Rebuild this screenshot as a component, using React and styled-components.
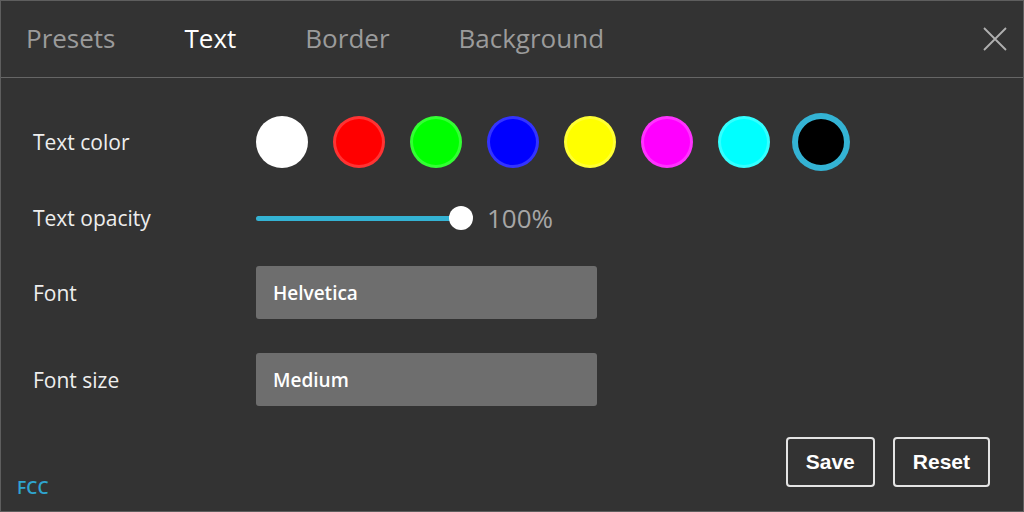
import React, { useState } from "react"
import styled, { createGlobalStyle } from "styled-components"

const GlobalStyle = createGlobalStyle`
  html, body {
    margin: 0;
    padding: 0;
    background: #333333;
  }
  * {
    box-sizing: border-box;
  }
`

const Panel = styled.div`
  display: flex;
  flex-direction: column;
  width: 1024px;
  height: 512px;
  background: #333333;
  border: 1px solid #5e5e5e;
  font-family: "Open Sans", "Noto Sans", sans-serif;
  color: #eeeeee;
`
const Header = styled.div`
  display: flex;
  align-items: center;
  height: 77px;
  padding: 0 0 2px 25px;
  border-bottom: 1px solid #666666;
`
const Tabs = styled.div`
  display: flex;
  gap: 69px;
  flex: 1;
`
const Tab = styled.div`
  font-size: 26px;
  line-height: 1;
  color: ${(p) => (p.$active ? "#ffffff" : "#9b9b9b")};
  cursor: pointer;
`
const CloseBtn = styled.button`
  display: flex;
  align-items: center;
  justify-content: center;
  width: 24px;
  height: 24px;
  margin: 2px 16px 0 0;
  padding: 0;
  background: none;
  border: none;
  cursor: pointer;
`
const Body = styled.div`
  display: flex;
  flex-direction: column;
  flex: 1;
  padding: 26px 33px 24px 32px;
`
const Row = styled.div`
  display: grid;
  grid-template-columns: 223px 1fr;
  align-items: center;
  height: ${(p) => p.$h}px;
`
const Label = styled.div`
  font-size: 21px;
  color: #eeeeee;
`
const Swatches = styled.div`
  display: flex;
  gap: 25px;
`
const Swatch = styled.div`
  width: 52px;
  height: 52px;
  border-radius: 50%;
  background: ${(p) => p.$color};
  border: 3px solid
    ${(p) => (p.$selected ? "#34b3d4" : "rgba(255, 255, 255, 0.2)")};
  box-shadow: ${(p) => (p.$selected ? "0 0 0 3px #34b3d4" : "none")};
  cursor: pointer;
`
const SliderWrap = styled.div`
  display: flex;
  align-items: center;
  gap: 26px;
`
const Track = styled.div`
  position: relative;
  width: 205px;
  height: 5px;
  border-radius: 3px;
  background: #4a4a4a;
`
const Fill = styled.div`
  height: 100%;
  border-radius: 3px;
  background: #34b3d4;
`
const Thumb = styled.div`
  position: absolute;
  top: 50%;
  width: 24px;
  height: 24px;
  margin: -12px 0 0 -12px;
  border-radius: 50%;
  background: #ffffff;
`
const Percent = styled.span`
  font-size: 26px;
  color: #a6a6a6;
`
const Select = styled.div`
  display: flex;
  align-items: center;
  width: 341px;
  height: 53px;
  padding: 0 17px;
  background: #6e6e6e;
  border-radius: 3px;
  font-size: 19px;
  font-weight: 600;
  color: #ffffff;
`
const Footer = styled.div`
  display: flex;
  justify-content: space-between;
  align-items: flex-end;
  margin-top: auto;
  margin-left: -16px;
`
const Brand = styled.span`
  font-size: 17.5px;
  font-weight: 600;
  color: #2fa5d0;
  line-height: 20px;
  margin-bottom: -10px;
`
const Buttons = styled.div`
  display: flex;
  gap: 18px;
`
const Button = styled.button`
  height: 50px;
  padding: 0 18px;
  background: transparent;
  border: 2px solid #e4e4e4;
  border-radius: 4px;
  color: #ffffff;
  font-family: "Liberation Sans", Arial, sans-serif;
  font-weight: 700;
  font-size: 21px;
  cursor: pointer;
`

const colors = [
  "#ffffff",
  "#ff0000",
  "#00ff00",
  "#0000ff",
  "#ffff00",
  "#ff00ff",
  "#00ffff",
  "#000000",
]

const tabs = ["Presets", "Text", "Border", "Background"]

export default function App() {
  const [tab, setTab] = useState("Text")
  const [color, setColor] = useState("#000000")
  const opacity = 100

  return (
    <>
      <GlobalStyle />
      <Panel>
        <Header>
          <Tabs>
            {tabs.map((t) => (
              <Tab key={t} $active={t === tab} onClick={() => setTab(t)}>
                {t}
              </Tab>
            ))}
          </Tabs>
          <CloseBtn aria-label="Close">
            <svg width="24" height="24" viewBox="0 0 24 24">
              <path
                d="M1 1 L23 23 M23 1 L1 23"
                stroke="#b0b0b0"
                strokeWidth="1.8"
                fill="none"
              />
            </svg>
          </CloseBtn>
        </Header>
        <Body>
          <Row $h={76}>
            <Label>Text color</Label>
            <Swatches>
              {colors.map((c) => (
                <Swatch
                  key={c}
                  $color={c}
                  $selected={c === color}
                  onClick={() => setColor(c)}
                />
              ))}
            </Swatches>
          </Row>
          <Row $h={76}>
            <Label>Text opacity</Label>
            <SliderWrap>
              <Track>
                <Fill style={{ width: `${opacity}%` }} />
                <Thumb style={{ left: `${opacity}%` }} />
              </Track>
              <Percent>{opacity}%</Percent>
            </SliderWrap>
          </Row>
          <Row $h={73}>
            <Label>Font</Label>
            <Select>Helvetica</Select>
          </Row>
          <Row $h={101}>
            <Label>Font size</Label>
            <Select>Medium</Select>
          </Row>
          <Footer>
            <Brand>FCC</Brand>
            <Buttons>
              <Button>Save</Button>
              <Button>Reset</Button>
            </Buttons>
          </Footer>
        </Body>
      </Panel>
    </>
  )
}
